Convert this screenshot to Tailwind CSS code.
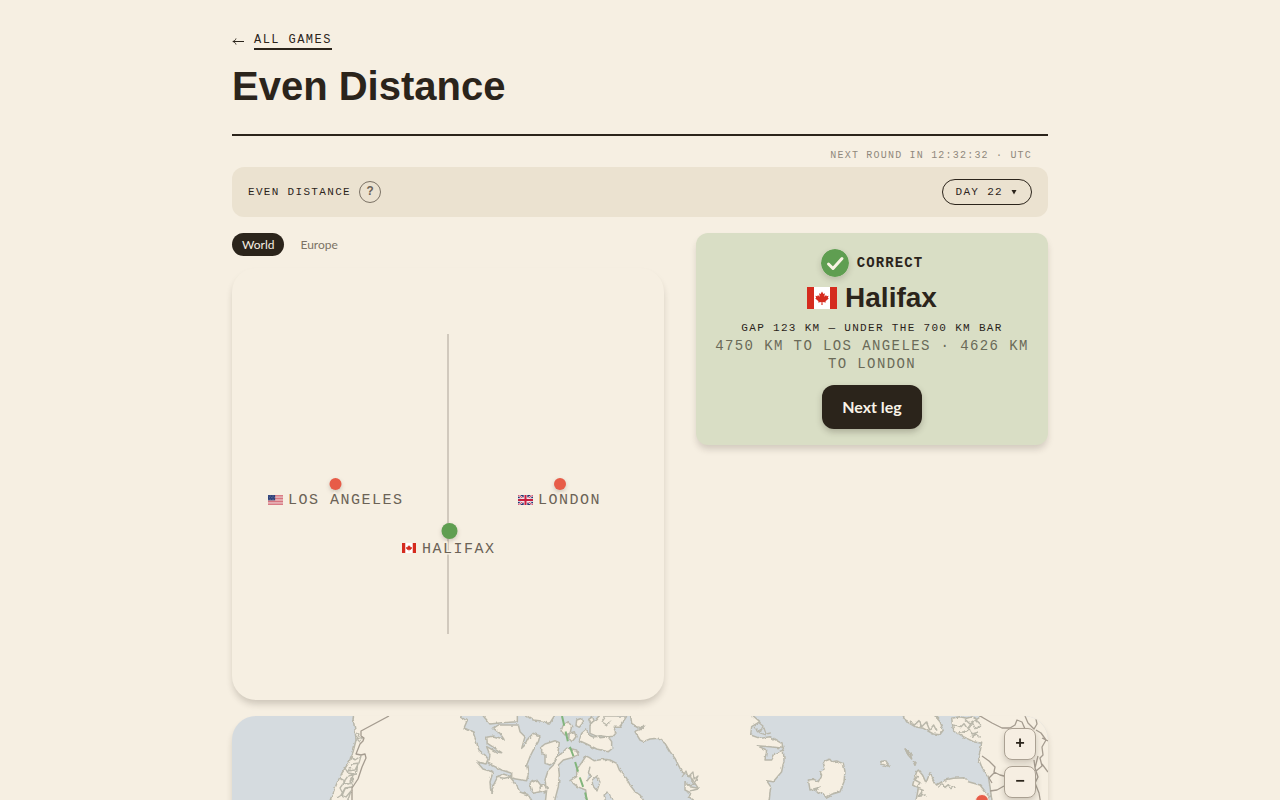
<!DOCTYPE html>
<html lang="en">
<head>
<meta charset="utf-8">
<meta name="viewport" content="width=device-width, initial-scale=1">
<title>Even Distance</title>
<script src="https://cdn.jsdelivr.net/npm/@tailwindcss/browser@4"></script>
</head>
<body class="bg-[#f6efe2] text-[#2b241b] font-['Lato',sans-serif]">
<svg width="0" height="0" class="absolute" aria-hidden="true">
  <symbol id="ca" viewBox="0 0 60 44" preserveAspectRatio="none">
    <path fill="#fff" d="M0 0h60v44H0z"/><path fill="#d52b1e" d="M0 0h14v44H0zM46 0h14v44H46z"/>
    <path fill="#d52b1e" d="m30 9 2.800 5 3-1.500-1.200 7 3.600-3.500 1 2.500 4-.8-1.500 4 1.800 1.500-6.500 5.300.8 2.500-6.800-1 .2 6h-2.400l.2-6-6.800 1 .8-2.500-6.500-5.300 1.800-1.500-1.500-4 4 .8 1-2.500 3.600 3.500-1.200-7 3 1.500z"/>
  </symbol>
  <symbol id="us" viewBox="0 0 42 30" preserveAspectRatio="none">
    <path fill="#f3e4e2" d="M0 0h42v30H0z"/>
    <path stroke="#cf5260" stroke-width="2.300" d="M0 1.200h42M0 5.800h42M0 10.400h42M0 15h42M0 19.600h42M0 24.200h42M0 28.800h42"/>
    <path fill="#2c3f78" d="M0 0h20v16H0z"/>
    <path stroke="#cdd3e4" stroke-width="1.500" stroke-dasharray="1.500 3" d="M2 3h17M4 8h15M2 13h17"/>
  </symbol>
  <symbol id="gb" viewBox="0 0 42 30" preserveAspectRatio="none">
    <path fill="#28356f" d="M0 0h42v30H0z"/>
    <path stroke="#fff" stroke-width="6" d="m0 0 42 30M42 0 0 30"/><path stroke="#c8203f" stroke-width="2.500" d="m0 0 42 30M42 0 0 30"/>
    <path stroke="#fff" stroke-width="10" d="M21 0v30M0 15h42"/><path stroke="#c8203f" stroke-width="6" d="M21 0v30M0 15h42"/>
  </symbol>
</svg>

<main class="mx-auto max-w-[880px] px-8 pt-8 pb-8">
  <header class="border-b-2 border-[#2b241b] pb-6">
    <a href="#" class="flex w-fit items-center gap-2.5 font-['Liberation_Mono',monospace] text-xs tracking-[0.12em]">
      <svg class="h-3 w-3" viewBox="0 0 12 12" fill="none" stroke="currentColor" stroke-width="1" aria-hidden="true"><path d="M1 6.500h11M4 3.500C3.500 5 2.500 6.200.8 6.500 2.500 6.800 3.500 8 4 9.500"/></svg>
      <span class="border-b-2 border-[#2b241b]">ALL GAMES</span>
    </a>
    <h1 class="mt-3 font-['Liberation_Sans',sans-serif] text-[40px] leading-12 font-bold">Even Distance</h1>
  </header>

  <p class="mt-3 pr-4 text-right font-['Liberation_Mono',monospace] text-[10px] leading-[15px] tracking-[0.12em] text-[#90887c]">NEXT ROUND IN 12:32:32 · UTC</p>

  <div class="mt-1 flex items-center justify-between rounded-xl bg-[#ebe2d0] px-4 py-3 font-['Liberation_Mono',monospace] text-[11px] tracking-[0.12em]">
    <div class="flex items-center gap-2">
      <h2>EVEN DISTANCE</h2>
      <button type="button" aria-label="How to play" class="h-[22px] w-[22px] rounded-full border border-[#7b7265] text-xs leading-5 font-bold tracking-normal text-[#6b6256]">?</button>
    </div>
    <button type="button" class="flex h-[26px] items-center gap-2 rounded-full border border-[#2b241b] pr-3.5 pl-3 tracking-[0.12em]">DAY 22
      <svg class="h-1.5 w-1.5" viewBox="0 0 6 6" fill="currentColor" aria-hidden="true"><path d="M.5 1h5L3 5.500z"/></svg>
    </button>
  </div>

  <div class="mt-4 grid grid-cols-1 items-start gap-8 md:grid-cols-[minmax(0,1fr)_352px]">
    <section>
      <div class="flex gap-1.5 text-xs">
        <button type="button" class="h-[23px] rounded-full bg-[#2b241b] px-2.5 text-[#f6eee2]">World</button>
        <button type="button" class="h-[23px] rounded-full px-2.5 text-[#7b7265]">Europe</button>
      </div>
      <div class="mt-3 rounded-3xl bg-[#f6efe2] shadow-[0_5px_7px_-1px_rgba(43,36,27,0.2)]">
        <svg class="block w-full" viewBox="0 0 432 432" role="img" aria-label="Halifax between Los Angeles and London">
          <path stroke="#d1c9bd" stroke-width="2" d="M216 66v300"/>
          <g style="filter:drop-shadow(0 2px 2px rgba(43,36,27,.2))">
            <circle cx="103.500" cy="216" r="6" fill="#e75c48"/>
            <circle cx="328" cy="216" r="6" fill="#e75c48"/>
            <circle cx="217.500" cy="263" r="8" fill="#5f9e51"/>
          </g>
          <use href="#us" x="36" y="227" width="15" height="10"/>
          <use href="#gb" x="286" y="227" width="15" height="10"/>
          <use href="#ca" x="170" y="275" width="14" height="10"/>
          <g class="font-['Liberation_Mono',monospace] text-[15px] tracking-[0.1em]" fill="#6b6256" stroke="#f6efe2" stroke-width="3" style="paint-order:stroke">
            <text x="56" y="236">LOS ANGELES</text>
            <text x="306" y="236">LONDON</text>
            <text x="190" y="285">HALIFAX</text>
          </g>
        </svg>
      </div>
    </section>

    <section class="flex flex-col items-center rounded-xl bg-[#d9dec5] p-4 text-center font-['Liberation_Mono',monospace] shadow-[0_5px_7px_-1px_rgba(43,36,27,0.18)]">
      <div class="flex items-center gap-2 text-sm font-bold tracking-[0.08em]">
        <svg class="h-7 w-7 rounded-full shadow-[0_3px_6px_rgba(43,36,27,0.18)]" viewBox="0 0 28 28" fill="none" aria-hidden="true"><circle cx="14" cy="14" r="14" fill="#5f9e51"/><path d="m7.500 15 4.500 4.500L21 9.500" stroke="#f9f3e3" stroke-width="3" stroke-linecap="round" stroke-linejoin="round"/></svg>
        CORRECT
      </div>
      <div class="mt-1 flex items-center gap-2 font-['Liberation_Sans',sans-serif] text-[28px] leading-[34px] font-bold">
        <svg class="h-[22px] w-[30px]" role="img" aria-label="Canada"><use href="#ca" width="30" height="22"/></svg>
        <h3>Halifax</h3>
      </div>
      <p class="mt-1 text-[11px] leading-[18px] tracking-[0.12em]">GAP 123 KM — UNDER THE 700 KM BAR</p>
      <p class="text-sm leading-[18px] tracking-[0.1em] text-[#6a6a58]">4750 KM TO LOS ANGELES · 4626 KM TO LONDON</p>
      <button type="button" class="mt-3 h-11 rounded-xl bg-[#2b241b] px-5 font-['Lato',sans-serif] text-base font-bold text-[#f9f3e8] shadow-[0_3px_6px_rgba(43,36,27,0.25)]">Next leg</button>
    </section>
  </div>

  <section class="relative mt-4 overflow-hidden rounded-3xl bg-[#d5dbdf] shadow-[0_5px_7px_-1px_rgba(43,36,27,0.2)]">
    <svg class="block w-full" viewBox="232 716 816 480" role="img" aria-label="Map of the route">
      <defs>
        <filter id="rough" filterUnits="userSpaceOnUse" x="220" y="700" width="840" height="510">
          <feTurbulence type="fractalNoise" baseFrequency="0.2" numOctaves="2" seed="4"/>
          <feDisplacementMap in="SourceGraphic" scale="3" xChannelSelector="R" yChannelSelector="G"/>
        </filter>
      </defs>
      <g fill="#f6efe2" stroke="#b9b7aa" stroke-width="4.500" stroke-linejoin="round" filter="url(#rough)">
        <!-- North American mainland -->
        <path stroke-width="1.500" d="M356 700L353 719L355 730L356 740L353 752L349 762L342 773L337 783L331 798L318 832L304 872L292 932L302 1012L342 1132L362 1222H542L572 1132L632 1052L682 992L640 940L600 880L560 850L535 805L528 795L520 792L515 783L510 777L498 776L494 784L491 793L490 782L493 772L483 769L477 762L486 764L488 759L485 755L479 750L473 732L464 728L467 721L461 717L460 700z"/>
        <!-- Pacific coast islands -->
        <path stroke-width="1.300" fill="none" d="M355 732l4 2-2 5 6-2-3 5-3-3M350 757l5 3 6-4-2 7-7 1-4 7 7-1 3-6-2 10-8 2-5 7 6 1 4-6-1 9-7 1-4 7 5 2 5-6-3 9-7 3-4 5M345 768l3 5 6 1-4 7 2 5-7 3-3 7M340 778l5 3-5 7 3 6-6 4"/>
        <!-- Arctic islands -->
        <g transform="translate(430 700) scale(.33333)">
          <path d="M155 20l5 28 20 24 35-4 47-3V20zM205 75l-15 10 20 15 12 18-32-10-20 4 2 18 43 28-15-2-30-16 10 25-5 25 40 20 30 10v15l30 5 15 2 5-22-5-25 10-25 10-20 15-25 5-17-20-8-15 15-10 20-10 10 10-35-15-15-5-20zM335 140l10-8 30-10 13 6-3 22-7 30-18 15-15-5v-25l-10-5zM395 160l15-15 30 5 5 15-25 10-20 5-15 15 3 30-3 35-10 38 5 62h-40l10-90-5-30 10-30 15-15 10-25zM285 20l5 28 20 12 30 4 18 8 15-24V20zM400 75l15-10 10 15-5 20-15 5-12-12zM418 100l15-5 5 15-12 15-10-10zM440 60l15-5 3 15-10 12-10-5zM476 58l12-8 5 15-10 8zM300 250l20-10 12 15-2 20-20 5-8-15zM330 262l12-8 10 10-8 15-12-5zM200 232l20-10 23 8-20 5z"/>
          <path d="M470 88l-15 12-7 22 22 10 30 15 35 8 10-8 0-22-10-14-25-4-20 4-13-6-10-18zM480 75l20-15 10-12h80l-2 4-18 27-20 0 8 20-8 10-40 4-30-13zM468 168l-13 20-15 20v22l-20 12 22 18 25 10 3 30 40 90h200l-70-90-10-15-15-10-15-20-10-20-22-25-8-20-20-10-20-2-28 4-15-10zM480 200l-5 20 10 6-15 18"/>
        </g>
        <path stroke-width="1.300" fill="#d5dbdf" d="M592 780l5-4 3 6-3 9-4-5zM604 795l4-3 5 8-6 7z"/>
        <!-- Greenland -->
        <path transform="translate(600 700) scale(.33333)" d="M90 10l2 38 3 22 15 10 20 5-25 10 15 25 10 5 20-8 25-2 20 15 15 25 15 20 10 20 10 20 30 20 20 30-25-5-15-12 0 22 20 10-10 10 15 10 5 10 60 230h60L508 298l4-38-12-18 20 3 25-30 7-35-2-30-25 10-10 20h-20l5-30-30-13 40 3 40 5-5-15-35-20-30 5-28-10 3-25 25-15-20-17V10z"/>
        <path stroke-width="1.300" fill="none" d="M754 727l4 4 6-3 2 6 5-1M758 722l5 4-3 7 6 2M682 777l4-6 2 6 5-5 1 7 4-3-3 6M687 785l8-1M690 791l8-2M634 726l7 3 3-4M606 716l-4 6 5 3 4-4"/>
        <!-- Iceland and the Faroes -->
        <g transform="translate(740 700) scale(.33333)">
          <path d="M255 183l15-5 5 7 15-2 20 7 5 25-3 30-12 30-25 8-17 9-13-17-10 5-10-10 15-8-30 8-5-30 17-2 13 7 10-20-5-10 15-10-5-15zM422 185l13-3 13 18-23-8zM497 147l15 18 3 12-13-15zM492 40l8 25 12 2V40z"/>
        </g>
        <!-- Scandinavia, Britain and the continent -->
        <g transform="translate(890 700) scale(.33333)">
          <path d="M35 20l5 28 10 17 25 15 25 5 30 17 20 2 10-14-10-25-15-17V20zM275 20v28l-15 10-15-8-15 5-20-5-25 5 5 35 30 20 30 15 25 5-5 25-5 20 10 25 20 30 5 30 8 60 40 100h200V20zM45 147l22 18-12-2zM70 185l8 3-3 8zM85 210l-5 5-5 15-7 25 17 10-15 80 30 90h160l38-145-28-35-35-10-10-12-35 2-25 5-25 15-8-10-12-27-12 30-10-22z"/>
          <path fill="none" d="M190 75l20 8 12-12 10 15 15-18 8 18 18-8M205 95l20 2 12-10 10 15 20-6M225 58l15 14 18-12 15 14M245 110l15-8 12 10M60 62l12 14 15-14 8 18 14-14 10 24 12-15 10 20M85 225l-10 15 15 8-10 15 20 8-15 18 25-5M145 262l12-10 8 10 10-8 8 12 15-6"/>
        </g>
      </g>
      <g fill="none" stroke="#a59c90" stroke-width="1.300" stroke-linejoin="round">
        <path d="M389 716l-28 15 0 5 3 2-1 3-3 3-4 10 5 1 4-1 1 4-4 9-4 12-6 9 0 12-4 20"/>
        <path d="M980 716l12 7 4 2 6 3 8 0 5-3 2-5 5 2 3 7-2 4M1025 716l3 7 6 6 3-5-1-5M1036 730l5 3 5 7-4 7 1 8-3 3 2 8-6 5M1042 738l6 3M982 756l7 5 6 6-1 5 6 3 8 2M1034 760l1 8 3 9-3 6 4 10 2 12M990 791l7-1 7-4M995 772l-6 6 3 5M1038 756l-3 12M1042 764l6 8"/>
      </g>
      <path d="M562 716l6 26 5 13 7 23 5 14 22 90 60 60 80 10 100-30 90-60 45-60" fill="none" stroke="#82b57c" stroke-width="2" stroke-dasharray="10 6"/>
      <circle cx="982" cy="801" r="6.500" fill="#e75c48" stroke="#f9e9dd" stroke-width="1"/>
    </svg>
    <div class="absolute top-3 right-3 flex flex-col gap-1.5 font-['Liberation_Mono',monospace] text-base font-bold">
      <button type="button" aria-label="Zoom in" class="flex h-8 w-8 items-center justify-center rounded-lg border border-[#aaa092] bg-[#f6eee2] shadow-[0_3px_6px_rgba(43,36,27,0.2)]">+</button>
      <button type="button" aria-label="Zoom out" class="flex h-8 w-8 items-center justify-center rounded-lg border border-[#aaa092] bg-[#f6eee2] shadow-[0_3px_6px_rgba(43,36,27,0.2)]">−</button>
    </div>
  </section>
</main>
</body>
</html>
